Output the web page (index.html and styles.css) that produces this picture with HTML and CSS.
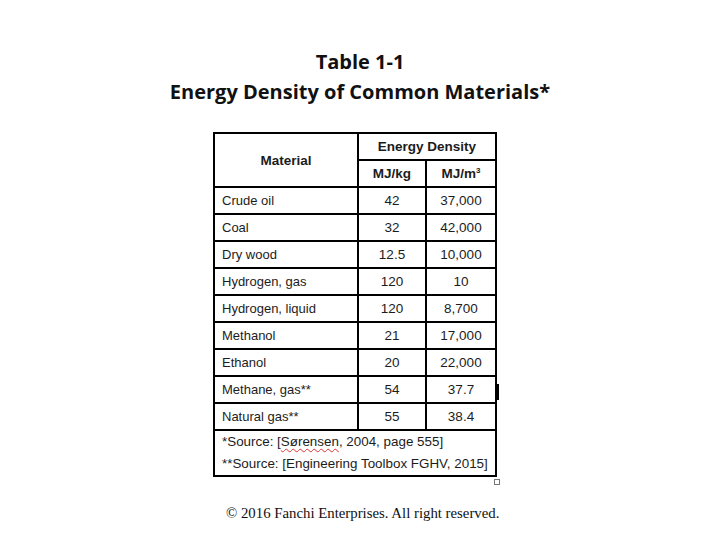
FILE: index.html
```html
<!DOCTYPE html>
<html>
<head>
<meta charset="utf-8">
<link rel="stylesheet" href="styles.css">
</head>
<body>
<div class="page">
  <h1 class="title">Table 1-1<br>Energy Density of Common Materials*</h1>
  <div class="table-wrap">
    <table class="energy">
      <thead>
        <tr class="h1">
          <th rowspan="2" class="mat">Material</th>
          <th colspan="2" class="ed">Energy Density</th>
        </tr>
        <tr class="h2">
          <th class="unit">MJ/kg</th>
          <th class="unit">MJ/m<sup>3</sup></th>
        </tr>
      </thead>
      <tbody>
        <tr><td>Crude oil</td><td class="n">42</td><td class="n">37,000</td></tr>
        <tr><td>Coal</td><td class="n">32</td><td class="n">42,000</td></tr>
        <tr><td>Dry wood</td><td class="n">12.5</td><td class="n">10,000</td></tr>
        <tr><td>Hydrogen, gas</td><td class="n">120</td><td class="n">10</td></tr>
        <tr><td>Hydrogen, liquid</td><td class="n">120</td><td class="n">8,700</td></tr>
        <tr><td>Methanol</td><td class="n">21</td><td class="n">17,000</td></tr>
        <tr><td>Ethanol</td><td class="n">20</td><td class="n">22,000</td></tr>
        <tr><td>Methane, gas**</td><td class="n">54</td><td class="n">37.7</td></tr>
        <tr><td>Natural gas**</td><td class="n">55</td><td class="n">38.4</td></tr>
        <tr class="src"><td colspan="3">*Source: [<span class="spell">Sørensen</span>, 2004, page 555]<br>**Source: [Engineering Toolbox FGHV, 2015]</td></tr>
      </tbody>
    </table>
    <span class="cursor"></span>
    <span class="handle"></span>
  </div>
  <p class="copy">© 2016 Fanchi Enterprises. All right reserved.</p>
</div>
</body>
</html>
```

FILE: styles.css
```css
html, body {
  margin: 0;
  padding: 0;
  background: #ffffff;
}
.page {
  width: 720px;
  height: 540px;
  display: flex;
  flex-direction: column;
  align-items: flex-start;
}
.title {
  align-self: stretch;
  margin: 47px 0 0 0;
  text-align: center;
  font-family: "Open Sans", sans-serif;
  font-weight: 700;
  font-size: 20px;
  line-height: 30px;
  color: #111;
}
.table-wrap {
  position: relative;
  margin: 25px 0 0 213px;
}
.energy {
  border-collapse: collapse;
  font-family: "Liberation Sans", Arial, sans-serif;
  font-size: 13px;
  color: #1c1c1c;
  border: 2px solid #000;
}
.energy th, .energy td {
  border: 2px solid #000;
  padding: 0;
}
.energy th {
  font-weight: bold;
  font-size: 13.5px;
}
.mat {
  width: 142px;
}
.h1 th {
  height: 25px;
  border-bottom-width: 1px;
}
.h1 .ed {
  vertical-align: middle;
}
.h2 th {
  height: 25px;
}
.unit:first-child {
  width: 66px;
}
.unit {
  width: 68px;
}
sup {
  font-size: 8px;
  vertical-align: 5px;
  line-height: 0;
}
.energy tbody td {
  height: 25px;
  padding-left: 7px;
}
.energy tbody td.n {
  text-align: center;
  padding-left: 0;
  font-size: 13.5px;
}
.src td {
  height: 44px;
  line-height: 22px;
  font-size: 13.4px;
  vertical-align: middle;
}
.spell {
  text-decoration: underline wavy #e03030;
  text-decoration-thickness: 1px;
  text-underline-offset: 2px;
}
.cursor {
  position: absolute;
  left: 284px;
  top: 252px;
  width: 2px;
  height: 16px;
  background: #000;
}
.handle {
  position: absolute;
  left: 281px;
  top: 347px;
  width: 4px;
  height: 4px;
  border: 1px solid #777;
  background: #fff;
}
.copy {
  align-self: stretch;
  margin: 28px 0 0 0;
  padding-left: 226px;
  font-family: "Liberation Serif", "Times New Roman", serif;
  font-size: 14.8px;
  color: #111;
}
```
